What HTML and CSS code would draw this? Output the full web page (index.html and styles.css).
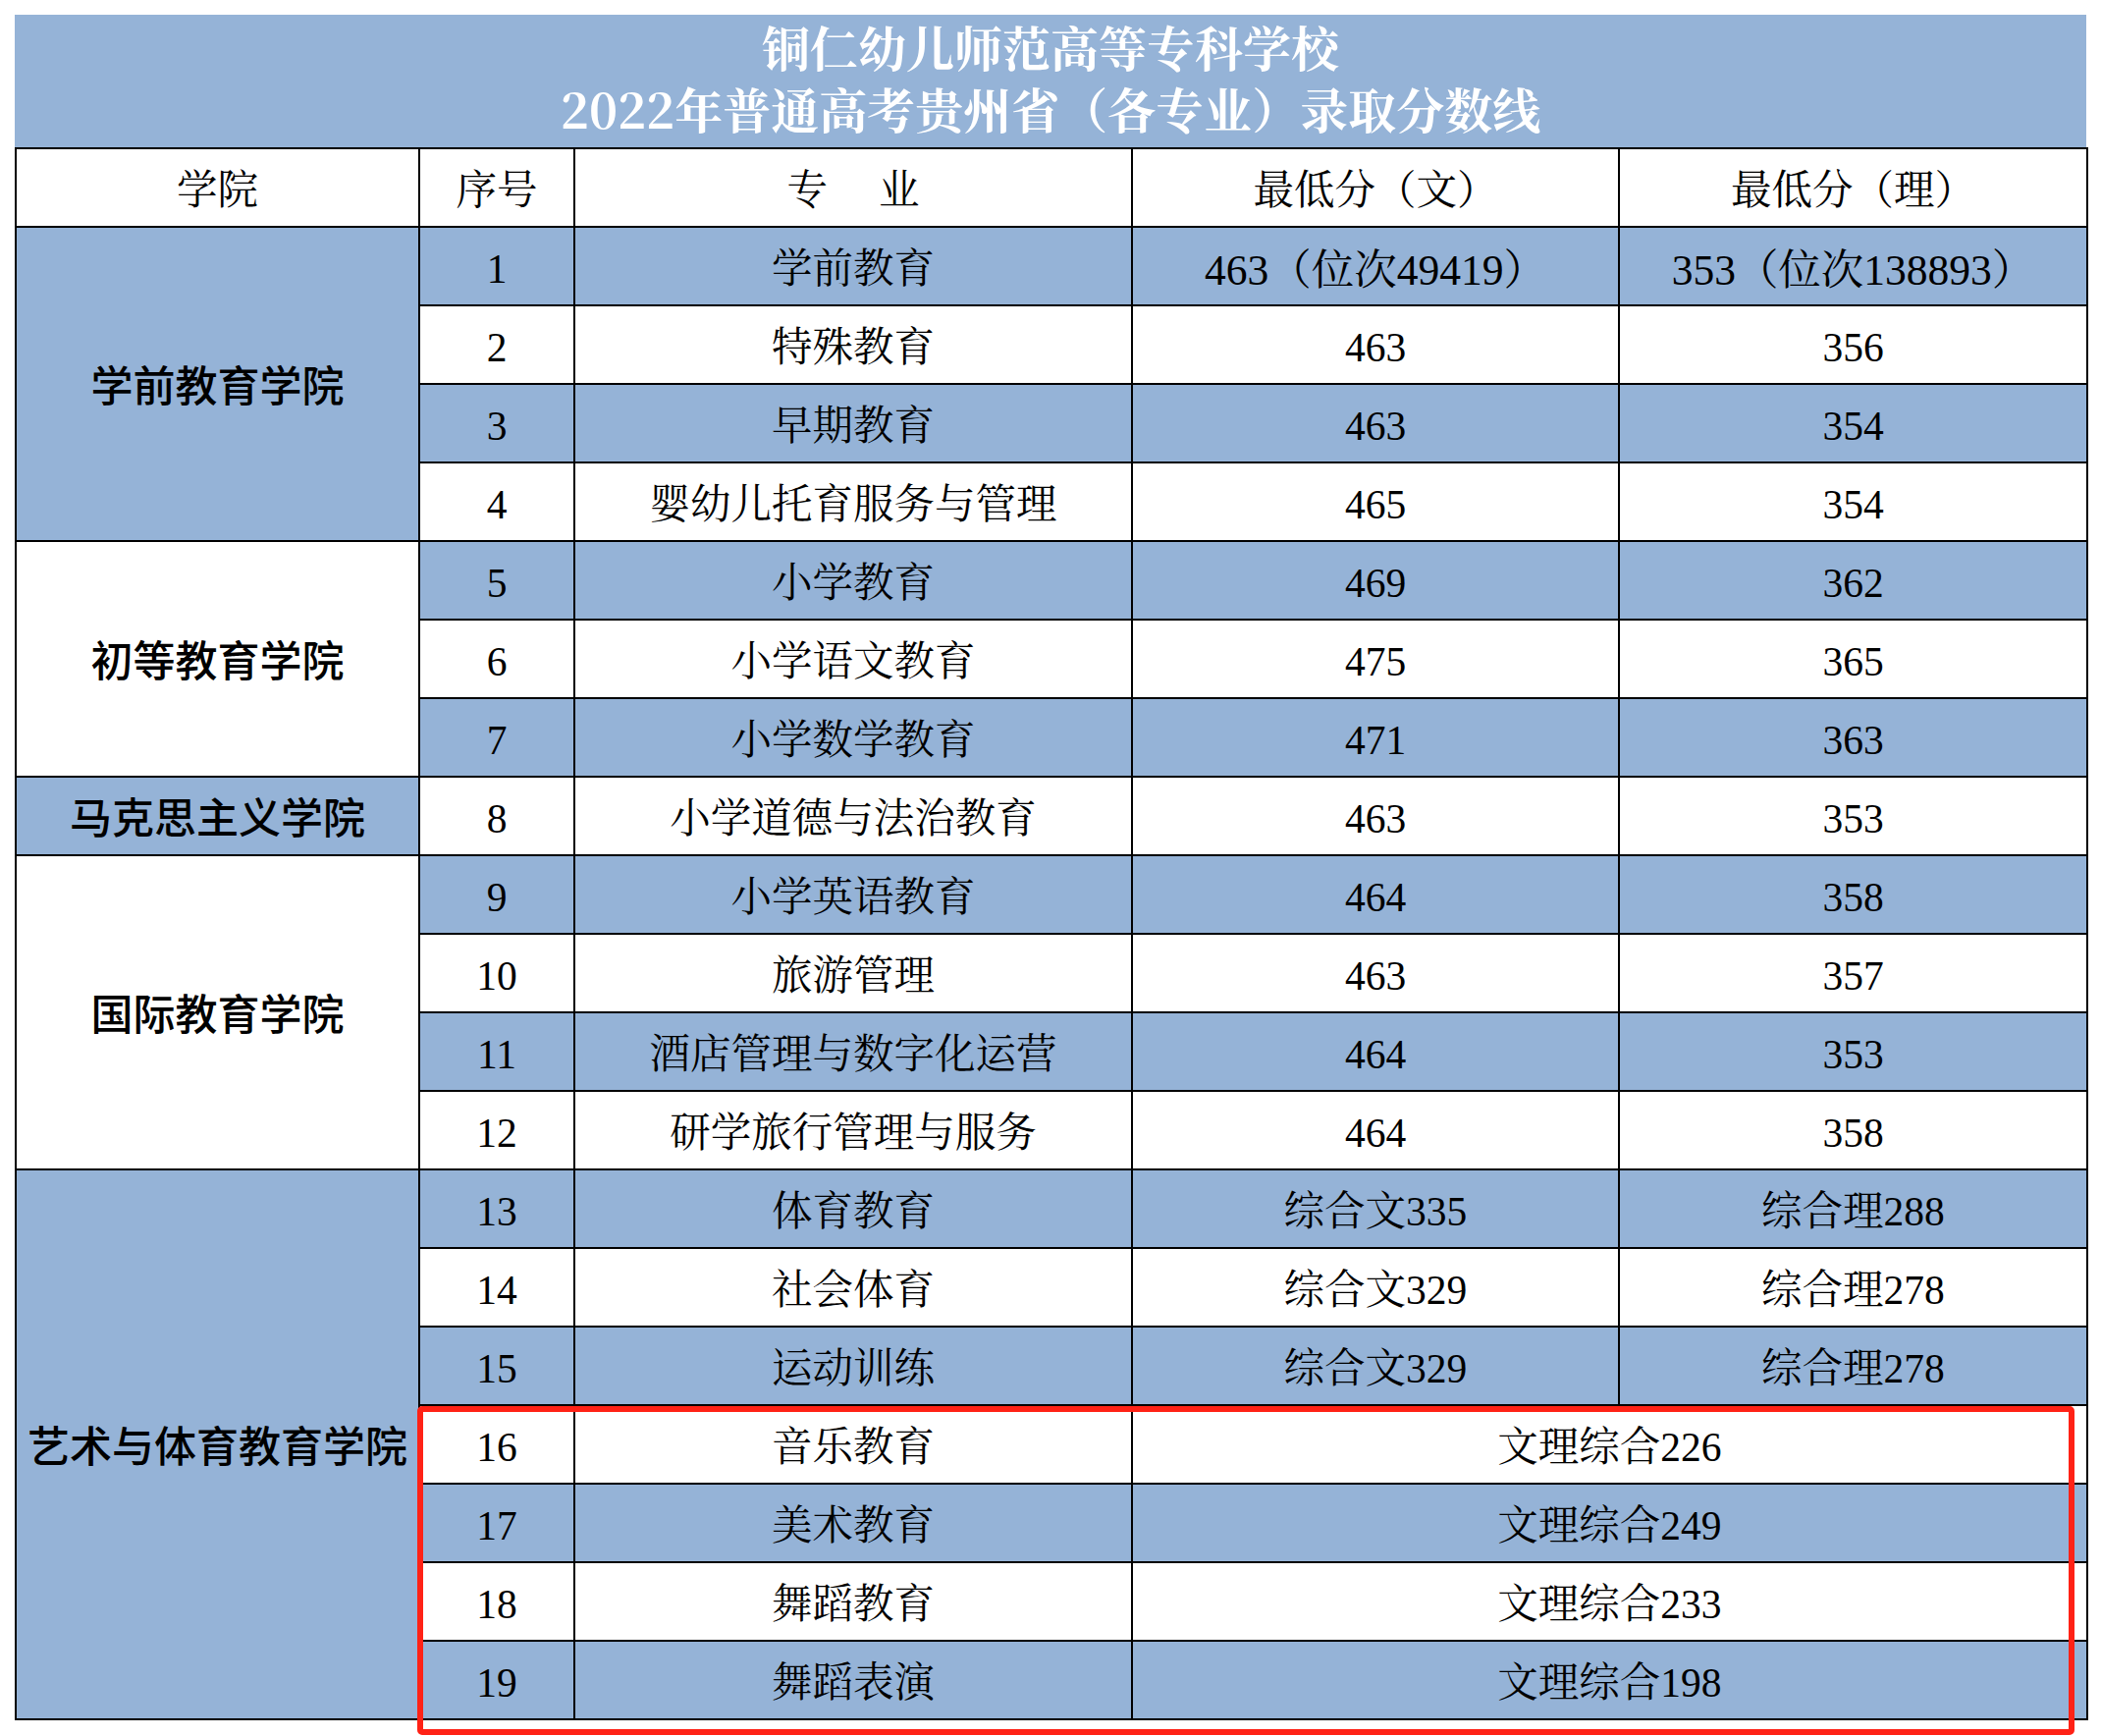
FILE: index.html
```html
<!DOCTYPE html>
<html lang="zh-CN">
<head>
<meta charset="utf-8">
<title>铜仁幼儿师范高等专科学校 2022年普通高考贵州省（各专业）录取分数线</title>
<link rel="stylesheet" href="styles.css">
</head>
<body>
<div class="page">
  <div class="title">
    <div class="title-line">铜仁幼儿师范高等专科学校</div>
    <div class="title-line">2022年普通高考贵州省（各专业）录取分数线</div>
  </div>
  <table class="scores">
    <colgroup>
      <col class="c-college">
      <col class="c-no">
      <col class="c-major">
      <col class="c-wen">
      <col class="c-li">
    </colgroup>
    <thead>
      <tr class="head">
        <th>学院</th>
        <th>序号</th>
        <th>专　 业</th>
        <th>最低分（文）</th>
        <th>最低分（理）</th>
      </tr>
    </thead>
    <tbody>
      <tr class="blue">
        <td class="college blue" rowspan="4">学前教育学院</td>
        <td>1</td><td>学前教育</td><td class="wide">463（位次49419）</td><td class="wide">353（位次138893）</td>
      </tr>
      <tr class="white"><td>2</td><td>特殊教育</td><td>463</td><td>356</td></tr>
      <tr class="blue"><td>3</td><td>早期教育</td><td>463</td><td>354</td></tr>
      <tr class="white"><td>4</td><td>婴幼儿托育服务与管理</td><td>465</td><td>354</td></tr>
      <tr class="blue">
        <td class="college white" rowspan="3">初等教育学院</td>
        <td>5</td><td>小学教育</td><td>469</td><td>362</td>
      </tr>
      <tr class="white"><td>6</td><td>小学语文教育</td><td>475</td><td>365</td></tr>
      <tr class="blue"><td>7</td><td>小学数学教育</td><td>471</td><td>363</td></tr>
      <tr class="white">
        <td class="college blue">马克思主义学院</td>
        <td>8</td><td>小学道德与法治教育</td><td>463</td><td>353</td>
      </tr>
      <tr class="blue">
        <td class="college white" rowspan="4">国际教育学院</td>
        <td>9</td><td>小学英语教育</td><td>464</td><td>358</td>
      </tr>
      <tr class="white"><td>10</td><td>旅游管理</td><td>463</td><td>357</td></tr>
      <tr class="blue"><td>11</td><td>酒店管理与数字化运营</td><td>464</td><td>353</td></tr>
      <tr class="white"><td>12</td><td>研学旅行管理与服务</td><td>464</td><td>358</td></tr>
      <tr class="blue">
        <td class="college blue" rowspan="7">艺术与体育教育学院</td>
        <td>13</td><td>体育教育</td><td>综合文335</td><td>综合理288</td>
      </tr>
      <tr class="white"><td>14</td><td>社会体育</td><td>综合文329</td><td>综合理278</td></tr>
      <tr class="blue"><td>15</td><td>运动训练</td><td>综合文329</td><td>综合理278</td></tr>
      <tr class="white"><td>16</td><td>音乐教育</td><td colspan="2">文理综合226</td></tr>
      <tr class="blue"><td>17</td><td>美术教育</td><td colspan="2">文理综合249</td></tr>
      <tr class="white"><td>18</td><td>舞蹈教育</td><td colspan="2">文理综合233</td></tr>
      <tr class="blue"><td>19</td><td>舞蹈表演</td><td colspan="2">文理综合198</td></tr>
    </tbody>
  </table>
  <div class="highlight"></div>
</div>
</body>
</html>
```

FILE: styles.css
```css
html, body {
  margin: 0;
  padding: 0;
  background: #ffffff;
}

.page {
  position: relative;
  padding: 15px 0 0 15px;
  width: 2125px;
  height: 1768px;
  box-sizing: border-box;
}

.title {
  width: 2110px;
  height: 135px;
  box-sizing: border-box;
  padding-top: 1px;
  background: #95b3d7;
  color: #ffffff;
  text-align: center;
  font-family: "Noto Serif CJK SC", "Liberation Serif", "Noto Sans CJK SC", serif;
  font-weight: 700;
  font-size: 49px;
  line-height: 63px;
}

.title-line {
  white-space: nowrap;
  height: 63px;
}

.scores {
  border-collapse: collapse;
  table-layout: fixed;
  width: 2110px;
  font-family: "Liberation Serif", "Noto Serif CJK SC", "Noto Sans CJK SC", serif;
  font-size: 41.5px;
  color: #000000;
}

.c-college { width: 411px; }
.c-no { width: 158px; }
.c-major { width: 568px; }
.c-wen { width: 496px; }
.c-li { width: 477px; }

.scores th,
.scores td {
  border: 2px solid #000000;
  padding: 8px 0 0 0;
  text-align: center;
  vertical-align: middle;
  font-weight: 400;
  line-height: 1.2;
  white-space: nowrap;
}

.scores tr {
  height: 80px;
}

.head th {
  background: #ffffff;
}

tr.blue td {
  background: #95b3d7;
}

tr.white td {
  background: #ffffff;
}

.scores td.wide {
  font-size: 43.5px;
}

.scores td.college {
  padding: 0;
  font-family: "Noto Sans CJK SC", "Liberation Sans", sans-serif;
  font-weight: 500;
  font-size: 43px;
}

.scores td.college.blue {
  background: #95b3d7;
}

.scores td.college.white {
  background: #ffffff;
}

.highlight {
  position: absolute;
  left: 425px;
  top: 1432px;
  width: 1688px;
  height: 335px;
  box-sizing: border-box;
  border: 6.5px solid #ff2216;
  border-radius: 5px;
  pointer-events: none;
}
```
